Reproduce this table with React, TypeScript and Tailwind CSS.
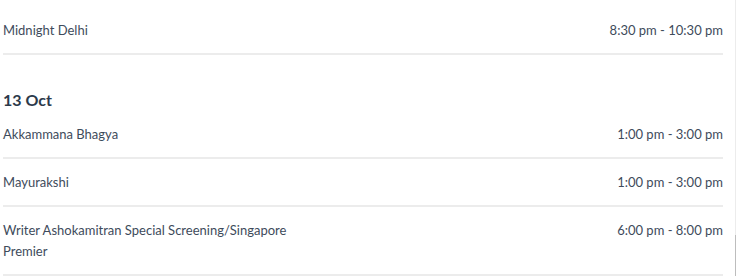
const rowsBefore = [{ title: "Midnight Delhi", time: "8:30 pm - 10:30 pm" }];

const oct13 = [
  { title: "Akkammana Bhagya", time: "1:00 pm - 3:00 pm" },
  { title: "Mayurakshi", time: "1:00 pm - 3:00 pm" },
  { title: "Writer Ashokamitran Special Screening/Singapore Premier", time: "6:00 pm - 8:00 pm" },
];

function Row({ title, time }: { title: string; time: string }) {
  return (
    <div className="flex justify-between border-b-2 border-[#ececec] pt-[13px] pb-[12px] text-[13px] leading-[21px] text-[#3e4b5b]">
      <span className="w-[305px]">{title}</span>
      <span className="whitespace-nowrap">{time}</span>
    </div>
  );
}

export default function App() {
  return (
    <div className="flex h-[276px] w-[736px] overflow-hidden bg-white" style={{ fontFamily: "Lato, 'Noto Sans', sans-serif" }}>
      <div className="ml-[3px] mt-[7px] w-[720px]">
        {rowsBefore.map((r) => (
          <Row key={r.title} {...r} />
        ))}
        <h3 className="mt-[33px] text-[16px] font-bold leading-[23px] text-[#2c3a4b]">13 Oct</h3>
        {oct13.map((r) => (
          <Row key={r.title} {...r} />
        ))}
      </div>
      <div className="ml-auto flex w-px flex-col">
        <div className="h-[235px] bg-[#ececec]" />
        <div className="flex-1 bg-[#bdbdbd]" />
      </div>
    </div>
  );
}
